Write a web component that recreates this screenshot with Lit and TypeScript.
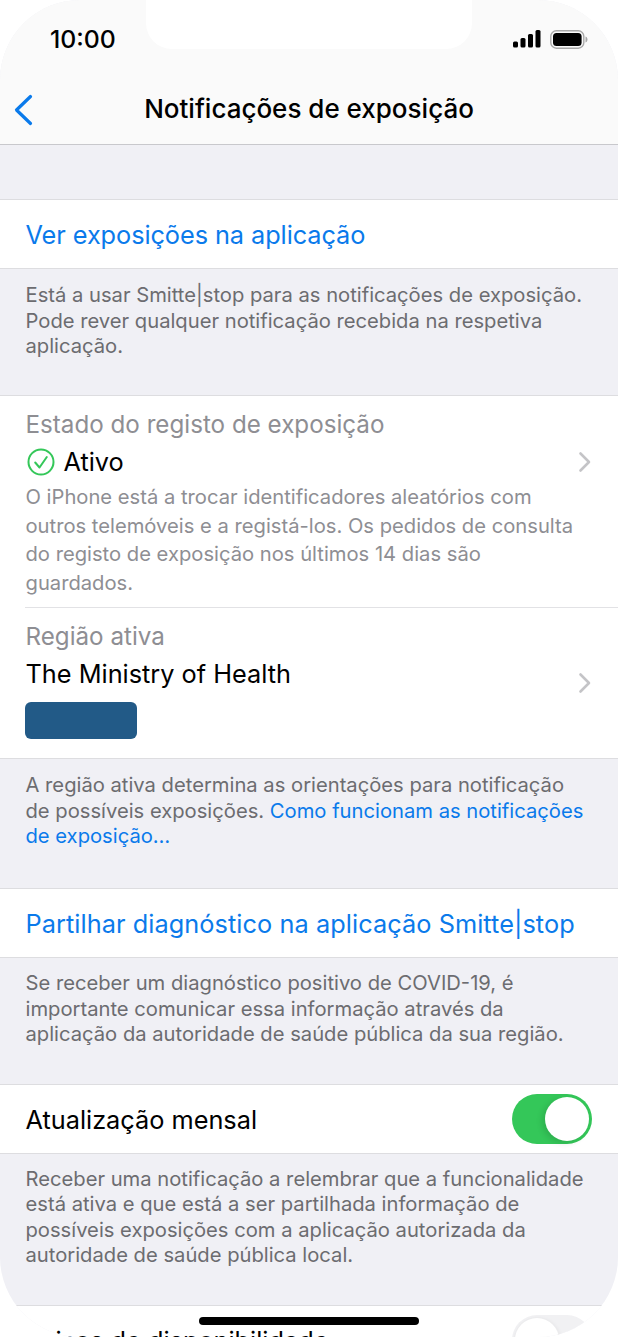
import { LitElement, html, css } from "lit";
import { customElement } from "lit/decorators.js";

const chevron = html`<svg class="chev" width="14" height="22" viewBox="0 0 14 22"><path d="M2.5 2.5 L11 11 L2.5 19.5" fill="none" stroke="#c4c4c7" stroke-width="2.6" stroke-linecap="round" stroke-linejoin="round"/></svg>`;

@customElement("app-root")
export class AppRoot extends LitElement {
  static styles = css`
    :host { display: block; width: 618px; height: 1337px; overflow: hidden; position: relative; background: #fff;
      font-family: Inter, "Noto Sans", "Liberation Sans", sans-serif; -webkit-font-smoothing: antialiased; }
    .screen { height: 1337px; overflow: hidden; border-radius: 80px; background: #f0f0f5; position: relative; }
    .notch { position: absolute; left: 146px; top: 0; width: 326px; height: 49px; background: #fff; border-radius: 0 0 26px 26px; z-index: 2; }
    .status { height: 80px; background: #fafafa; position: relative; display: flex; justify-content: space-between; padding: 23px 30px 0 50px; box-sizing: border-box; }
    .time { font-size: 24.8px; font-weight: 500; line-height: 32px; color: #000; }
    .status-icons { display: flex; gap: 9px; padding-top: 7px; align-items: flex-start; }
    .nav { height: 64px; background: #fafafa; border-bottom: 1px solid #c8c8cc; display: flex; align-items: center; position: relative; justify-content: center; }
    .back { position: absolute; left: 13px; top: 14px; }
    .title { font-size: 26px; font-weight: 500; color: #000; line-height: 32px; margin-top: -6px; }
    .spacer { height: 54px; }
    .row { background: #fff; border-top: 1px solid #dddde0; border-bottom: 1px solid #dddde0; padding: 0 26px 0 25.5px; display: flex; align-items: center; justify-content: space-between; height: 68px; }
    .row > span { margin-top: 1px; }
    .link { color: #0a7aeb; font-size: 25.3px; line-height: 32px; }
    .link.ver { letter-spacing: -0.07px; }
    .link.share { letter-spacing: 0.065px; }
    .label { color: #000; font-size: 25.3px; line-height: 32px; }
    .foot { color: #6c6c70; font-size: 20.2px; line-height: 25.5px; padding: 13px 25.5px 0; }
    .foot a { color: #0a7aeb; text-decoration: none; }
    .f1 { height: 113px; }
    .f2 { height: 116px; }
    .f3 { height: 114px; padding-top: 12px; }
    .f4 { height: 139.5px; padding-top: 11.5px; }
    .group { background: #fff; border-top: 1px solid #dddde0; border-bottom: 1px solid #dddde0; }
    .cell { padding: 14px 26px 0 25.5px; position: relative; }
    .cell.one { height: 197px; }
    .cell.two { height: 136px; display: flex; justify-content: space-between; align-items: flex-start; }
    .cell.two .chev { align-self: center; margin-top: -14px; }
    .muted { color: #8e8e93; font-size: 24.2px; line-height: 30px; }
    .ativo { display: flex; align-items: center; gap: 9px; font-size: 25.3px; line-height: 34px; color: #000; margin-top: 5px; }
    .ativo .check { margin-left: 1px; }
    .ativo .chev { margin-left: auto; }
    .desc { color: #8e8e93; font-size: 20.2px; line-height: 28.7px; margin-top: 4px; padding-right: 14px; }
    .sep { height: 1px; background: #e2e2e5; margin-left: 25px; }
    .region { margin-top: 6px; }
    .redact { width: 112px; height: 37px; background: #225a87; border-radius: 6px; margin: 12px 0 0 -1px; }
    .toggle { width: 80px; height: 50px; border-radius: 25px; background: #34c759; position: relative; flex: none; }
    .knob { position: absolute; right: 3px; top: 3px; width: 44px; height: 44px; border-radius: 50%; background: #fff; box-shadow: -3px 2px 6px rgba(0,0,0,.12); }
    .toggle.off { background: #f1f1f3; }
    .toggle.off .knob { left: 3px; right: auto; box-shadow: 0 0 0 1px #ececee, 1px 1px 4px rgba(0,0,0,.08); }
    .home { position: absolute; left: 199px; top: 1317px; width: 220px; height: 8px; border-radius: 4px; background: #000; z-index: 3; }
  `;

  render() {
    return html`<div class="screen">
      <div class="notch"></div>
      <div class="status">
        <div class="time">10:00</div>
        <div class="status-icons">
          <svg width="28" height="18" viewBox="0 0 28 18" fill="#000">
            <rect x="0" y="11.5" width="5" height="6" rx="1.5"/><rect x="7.5" y="8" width="5" height="9.5" rx="1.5"/>
            <rect x="15" y="4" width="5" height="13.5" rx="1.5"/><rect x="22.5" y="0" width="5" height="17.5" rx="1.5"/>
          </svg>
          <svg width="38" height="19" viewBox="0 0 38 19">
            <rect x="0.8" y="0.8" width="33" height="17.4" rx="5.5" fill="none" stroke="#a8a8a8" stroke-width="1.4"/>
            <rect x="3" y="3" width="28.6" height="13" rx="3.5" fill="#000"/>
            <path d="M35.5 6.5 C37 7 37.5 8.5 37.5 9.5 C37.5 10.5 37 12 35.5 12.5 Z" fill="#a8a8a8"/>
          </svg>
        </div>
      </div>
      <div class="nav">
        <svg class="back" width="22" height="32" viewBox="0 0 22 32"><path d="M17.5 2.5 L3.5 16 L17.5 29.5" fill="none" stroke="#0a7aeb" stroke-width="3.2" stroke-linecap="round" stroke-linejoin="round"/></svg>
        <div class="title">Notificações de exposição</div>
      </div>
      <div class="spacer"></div>

      <div class="row"><span class="link ver">Ver exposições na aplicação</span></div>
      <div class="foot f1">Está a usar Smitte|stop para as notificações de exposição. Pode rever qualquer notificação recebida na respetiva aplicação.</div>

      <div class="group">
        <div class="cell one">
          <div class="muted">Estado do registo de exposição</div>
          <div class="ativo">
            <svg class="check" width="28" height="28" viewBox="0 0 28 28"><circle cx="14" cy="14" r="12.5" fill="none" stroke="#34c759" stroke-width="2"/><path d="M8.2 14.5 L12.5 19.5 L19.8 9" fill="none" stroke="#34c759" stroke-width="2" stroke-linecap="round" stroke-linejoin="round"/></svg>
            Ativo
            ${chevron}
          </div>
          <div class="desc">O iPhone está a trocar identificadores aleatórios com outros telemóveis e a registá-los. Os pedidos de consulta do registo de exposição nos últimos 14 dias são guardados.</div>
        </div>
        <div class="sep"></div>
        <div class="cell two">
          <div>
            <div class="muted">Região ativa</div>
            <div class="label region">The Ministry of Health</div>
            <div class="redact"></div>
          </div>
          ${chevron}
        </div>
      </div>
      <div class="foot f2">A região ativa determina as orientações para notificação de possíveis exposições. <a>Como funcionam as notificações de exposição…</a></div>

      <div class="row"><span class="link share">Partilhar diagnóstico na aplicação Smitte|stop</span></div>
      <div class="foot f3">Se receber um diagnóstico positivo de COVID-19, é importante comunicar essa informação através da aplicação da autoridade de saúde pública da sua região.</div>

      <div class="row"><span class="label">Atualização mensal</span><div class="toggle"><div class="knob"></div></div></div>
      <div class="foot f4">Receber uma notificação a relembrar que a funcionalidade está ativa e que está a ser partilhada informação de possíveis exposições com a aplicação autorizada da autoridade de saúde pública local.</div>

      <div class="row"><span class="label">Avisos de disponibilidade</span><div class="toggle off"><div class="knob"></div></div></div>
      <div class="home"></div>
    </div>`;
  }
}
